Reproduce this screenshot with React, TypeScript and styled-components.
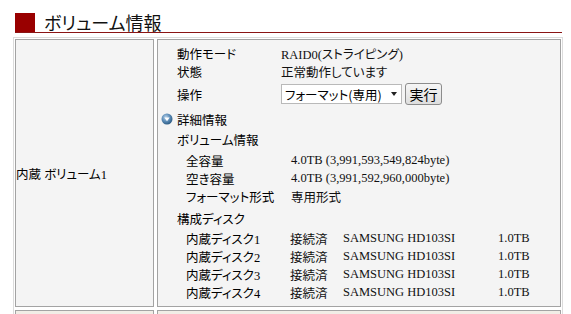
import React from 'react';
import styled, { createGlobalStyle } from 'styled-components';

const GlobalStyle = createGlobalStyle`
  html, body {
    margin: 0;
    padding: 0;
    background: #ffffff;
    overflow: hidden;
  }
  body {
    font-family: 'Liberation Serif', 'Noto Sans CJK JP', serif;
    font-size: 12.5px;
    color: #000;
    font-feature-settings: 'palt' 1;
  }
`;

const Page = styled.div`
  padding: 12px 0 0 15px;
  width: 547px;
`;

const Header = styled.div`
  display: flex;
  align-items: center;
  gap: 9px;
  height: 20px;
  border-bottom: 1px solid #8a1414;
`;

const Mark = styled.div`
  width: 20px;
  height: 19px;
  background: #990000;
`;

const Title = styled.h1`
  margin: 0;
  font-family: 'Noto Sans CJK JP', sans-serif;
  font-weight: 400;
  font-size: 18px;
  line-height: 20px;
  color: #111;
`;

const Frame = styled.div`
  margin: 4px 0 0 -2px;
  width: 546px;
  border: 1px solid #dcdcdc;
  padding: 1px;
  display: grid;
  grid-template-columns: 139px 1fr;
  column-gap: 3px;
  row-gap: 3px;
`;

const Cell = styled.div<{ $alt?: boolean }>`
  border: 1px solid #a3a3a3;
  background: ${(p) => (p.$alt ? '#f1ede6' : '#f4f4f4')};
  min-height: 18px;
`;

const NameCell = styled(Cell)`
  display: flex;
  align-items: center;
  padding-left: 0;
  font-family: 'Liberation Serif', 'Noto Sans CJK JP', serif;
`;

const InfoCell = styled(Cell)`
  display: flex;
  flex-direction: column;
  padding: 4px 0 5px 0;
`;

const Row = styled.div<{ $h?: number; $top?: number; $indent?: number }>`
  display: flex;
  align-items: center;
  height: ${(p) => p.$h ?? 18}px;
  margin-top: ${(p) => p.$top ?? 0}px;
  padding-left: ${(p) => p.$indent ?? 19}px;
  white-space: nowrap;
`;

const Label = styled.span<{ $w: number }>`
  width: ${(p) => p.$w}px;
  flex: none;
`;

const Value = styled.span<{ $w?: number }>`
  ${(p) => (p.$w ? `width: ${p.$w}px; flex: none;` : '')}
  color: #111;
`;

const SelectBox = styled.div`
  position: relative;
  width: 121px;
  height: 20px;
`;

const Select = styled.select`
  appearance: none;
  width: 100%;
  height: 100%;
  margin: 0;
  padding: 0 0 0 3px;
  border: 1px solid #b9b9b9;
  background: #fff;
  font-family: 'Noto Sans CJK JP', sans-serif;
  font-feature-settings: 'palt' 1;
  font-size: 12.5px;
  color: #000;
`;

const Arrow = styled.span`
  position: absolute;
  right: 5px;
  top: 8px;
  width: 0;
  height: 0;
  border-left: 3.5px solid transparent;
  border-right: 3.5px solid transparent;
  border-top: 4px solid #222;
  pointer-events: none;
`;

const RunButton = styled.button`
  margin-left: 3px;
  width: 37px;
  height: 22px;
  padding: 0;
  border: 1px solid #8c8c8c;
  border-radius: 3px;
  background: linear-gradient(#f6f6f6, #dedede);
  font-family: 'Noto Sans CJK JP', sans-serif;
  font-size: 14px;
  line-height: 18px;
  color: #000;
`;

const Toggle = styled.span`
  display: inline-flex;
  width: 12px;
  height: 12px;
  margin-right: 4px;
`;

const SectionTitle = styled.span``;

const DetailIcon = () => (
  <Toggle>
    <svg width="12" height="12" viewBox="0 0 12 12">
      <defs>
        <radialGradient id="ball" cx="40%" cy="35%" r="65%">
          <stop offset="0%" stopColor="#b9d3ea" />
          <stop offset="55%" stopColor="#5d8db8" />
          <stop offset="100%" stopColor="#2e5d86" />
        </radialGradient>
      </defs>
      <circle cx="6" cy="6" r="5.5" fill="url(#ball)" />
      <path d="M3.3 4.6 L8.7 4.6 L6 8.2 Z" fill="#ffffff" />
    </svg>
  </Toggle>
);

const disks = [1, 2, 3, 4];

const App = () => (
  <>
    <GlobalStyle />
    <Page>
      <Header>
        <Mark />
        <Title>ボリューム情報</Title>
      </Header>
      <Frame>
        <NameCell>内蔵 ボリューム1</NameCell>
        <InfoCell>
          <Row>
            <Label $w={104}>動作モード</Label>
            <Value>RAID0(ストライピング)</Value>
          </Row>
          <Row>
            <Label $w={104}>状態</Label>
            <Value>正常動作しています</Value>
          </Row>
          <Row $h={28}>
            <Label $w={104}>操作</Label>
            <SelectBox>
              <Select defaultValue="format">
                <option value="format">フォーマット(専用)</option>
              </Select>
              <Arrow />
            </SelectBox>
            <RunButton type="button">実行</RunButton>
          </Row>
          <Row $top={2} $indent={3}>
            <DetailIcon />
            <SectionTitle>詳細情報</SectionTitle>
          </Row>
          <Row $top={2}>
            <SectionTitle>ボリューム情報</SectionTitle>
          </Row>
          <Row $top={3} $indent={28}>
            <Label $w={105}>全容量</Label>
            <Value>4.0TB (3,991,593,549,824byte)</Value>
          </Row>
          <Row $indent={28}>
            <Label $w={105}>空き容量</Label>
            <Value>4.0TB (3,991,592,960,000byte)</Value>
          </Row>
          <Row $indent={28}>
            <Label $w={105}>フォーマット形式</Label>
            <Value>専用形式</Value>
          </Row>
          <Row $top={4}>
            <SectionTitle>構成ディスク</SectionTitle>
          </Row>
          {disks.map((n, i) => (
            <Row key={n} $top={i === 0 ? 2 : 0} $indent={28}>
              <Label $w={104}>内蔵ディスク{n}</Label>
              <Value $w={53}>接続済</Value>
              <Value $w={155}>SAMSUNG HD103SI</Value>
              <Value>1.0TB</Value>
            </Row>
          ))}
        </InfoCell>
        <Cell $alt />
        <Cell $alt />
      </Frame>
    </Page>
  </>
);

export default App;
